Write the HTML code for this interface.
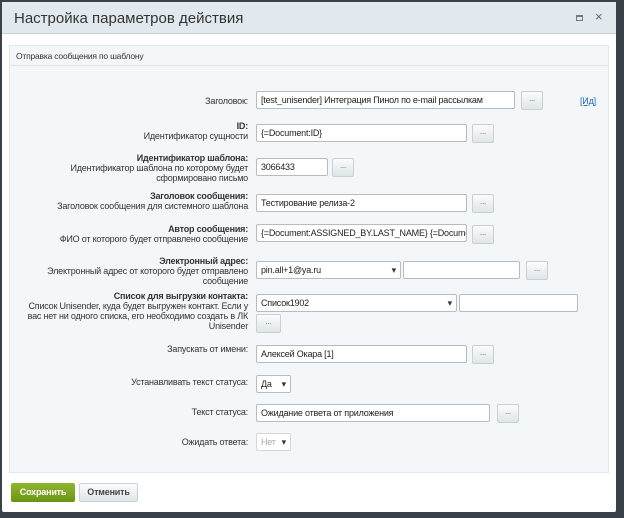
<!DOCTYPE html>
<html><head><meta charset="utf-8"><style>
*{box-sizing:border-box;margin:0;padding:0}
body{width:624px;height:518px;background:#3b4149;position:relative;overflow:hidden;font-family:"Liberation Sans","Noto Sans CJK SC",sans-serif;font-size:9px;letter-spacing:-0.2px;color:#333}
.dlg{position:absolute;left:2px;top:2px;width:614px;height:510px;background:#fff;border-radius:2px}
.hdr{position:absolute;left:0;top:0;width:614px;height:32px;background:#e2e9ee;border-bottom:1px solid #c9d0d6}
.title{position:absolute;left:12px;top:8px;font-size:15px;letter-spacing:0;color:#333}
.panel{position:absolute;left:9px;top:45px;width:600px;height:428px;background:#f4f7f9;border:1px solid #e3e8eb}
.sub{position:absolute;left:9px;top:45px;width:600px;height:21px;border:1px solid #e3e8eb;border-bottom:1px solid #dde3e7;background:#f4f7f9;font-size:8.5px;padding:5px 6px}
.a{position:absolute;white-space:nowrap}
.lbl{position:absolute;right:376px;text-align:right;line-height:10px;color:#333;white-space:nowrap}
.lbl b{font-weight:bold}
.inp{position:absolute;height:18px;background:#fff;border:1px solid #b6bcc0;border-radius:2px;padding:3px 4px;white-space:nowrap;overflow:hidden;color:#222;line-height:10px}
.btn{position:absolute;width:22px;height:19px;background:linear-gradient(#fbfcfc,#dfe5e8);border:1px solid #c9d0d4;border-radius:2px;font-size:8px;text-align:center;line-height:14px;color:#666}
.sel::after{content:"▾";position:absolute;right:4px;top:3px;font-size:9px;color:#333}
</style></head><body>
<div class="dlg">
<div class="hdr"><div class="title">Настройка параметров действия</div>
<div class="a" style="left:574px;top:13px;width:7px;height:6px;border:1px solid #777;border-top-width:2px"></div>
<div class="a" style="left:593px;top:7px;font-size:13px;color:#666">×</div>
</div>
</div>
<div class="panel"></div>
<div class="sub">Отправка сообщения по шаблону</div>

<div class="lbl" style="top:96px">Заголовок:</div>
<div class="inp" style="left:256px;top:91px;width:259px">[test_unisender] Интеграция Пинол по e-mail рассылкам</div>
<div class="btn" style="left:521px;top:91px">...</div>
<div class="a" style="left:580px;top:96px;color:#2a6ab3;text-decoration:underline">[Ид]</div>

<div class="lbl" style="top:121px"><b>ID:</b><br>Идентификатор сущности</div>
<div class="inp" style="left:256px;top:124px;width:211px">{=Document:ID}</div>
<div class="btn" style="left:472px;top:124px">...</div>

<div class="lbl" style="top:153px"><b>Идентификатор шаблона:</b><br>Идентификатор шаблона по которому будет<br>сформировано письмо</div>
<div class="inp" style="left:256px;top:158px;width:72px">3066433</div>
<div class="btn" style="left:332px;top:158px">...</div>

<div class="lbl" style="top:191px"><b>Заголовок сообщения:</b><br>Заголовок сообщения для системного шаблона</div>
<div class="inp" style="left:256px;top:194px;width:211px">Тестирование релиза-2</div>
<div class="btn" style="left:472px;top:194px">...</div>

<div class="lbl" style="top:224px"><b>Автор сообщения:</b><br>ФИО от которого будет отправлено сообщение</div>
<div class="inp" style="left:256px;top:224px;width:211px">{=Document:ASSIGNED_BY.LAST_NAME} {=Document</div>
<div class="btn" style="left:472px;top:225px">...</div>

<div class="lbl" style="top:256px"><b>Электронный адрес:</b><br>Электронный адрес от которого будет отправлено<br>сообщение</div>
<div class="inp sel" style="left:256px;top:261px;width:145px">pin.all+1@ya.ru</div>
<div class="inp" style="left:403px;top:261px;width:117px"></div>
<div class="btn" style="left:526px;top:261px">...</div>

<div class="lbl" style="top:291px"><b>Список для выгрузки контакта:</b><br>Список Unisender, куда будет выгружен контакт. Если у<br>вас нет ни одного списка, его необходимо создать в ЛК<br>Unisender</div>
<div class="inp sel" style="left:256px;top:294px;width:201px">Список1902</div>
<div class="inp" style="left:459px;top:294px;width:119px"></div>
<div class="btn" style="left:256px;top:314px;width:25px">...</div>

<div class="lbl" style="top:344px">Запускать от имени:</div>
<div class="inp" style="left:256px;top:345px;width:211px">Алексей Окара [1]</div>
<div class="btn" style="left:472px;top:345px">...</div>

<div class="lbl" style="top:377px">Устанавливать текст статуса:</div>
<div class="inp sel" style="left:256px;top:375px;width:35px">Да</div>

<div class="lbl" style="top:407px">Текст статуса:</div>
<div class="inp" style="left:256px;top:404px;width:234px">Ожидание ответа от приложения</div>
<div class="btn" style="left:497px;top:404px">...</div>

<div class="lbl" style="top:437px">Ожидать ответа:</div>
<div class="inp sel" style="left:256px;top:433px;width:35px;color:#aaa;border-color:#d3d8db">Нет</div>

<div class="a" style="left:11px;top:483px;width:64px;height:19px;background:linear-gradient(#8fb631,#6b9414);border-radius:2px;color:#fff;font-weight:bold;text-align:center;line-height:19px">Сохранить</div>
<div class="a" style="left:79px;top:483px;width:59px;height:19px;background:linear-gradient(#fbfcfc,#e0e5e8);border:1px solid #ccd2d5;border-radius:2px;color:#444;font-weight:bold;text-align:center;line-height:17px">Отменить</div>
</body></html>
